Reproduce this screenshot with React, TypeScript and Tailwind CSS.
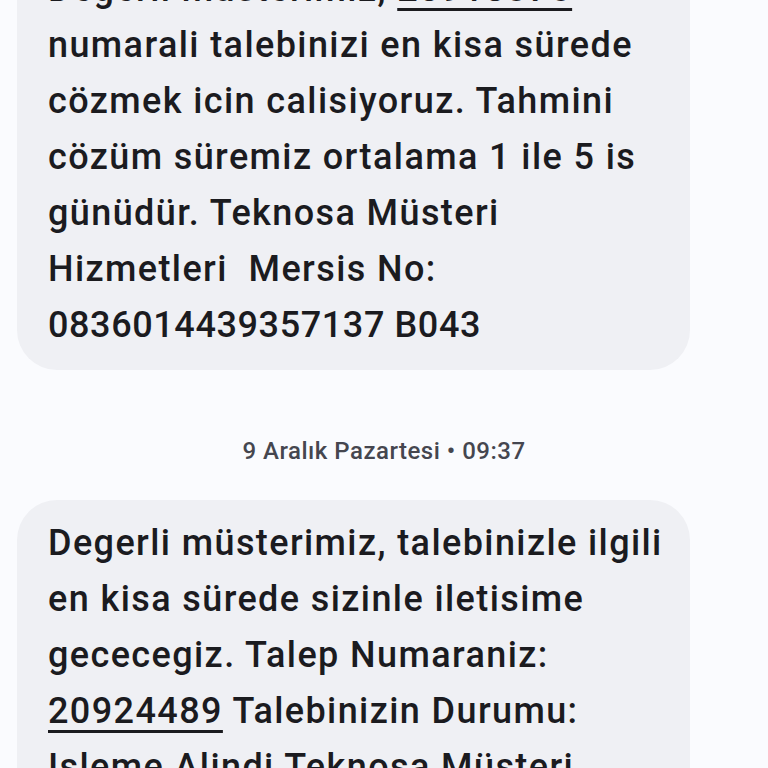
const topLines: React.ReactNode[] = [
  <>
    Degerli müsterimiz, <span className="underline decoration-[3px] underline-offset-[7px]">20918375</span>
  </>,
  "numarali talebinizi en kisa sürede",
  "cözmek icin calisiyoruz. Tahmini",
  "cözüm süremiz ortalama 1 ile 5 is",
  "günüdür. Teknosa Müsteri",
  "Hizmetleri  Mersis No:",
  <span className="tracking-[0.6px]">0836014439357137 B043</span>,
];

const bottomLines: React.ReactNode[] = [
  "Degerli müsterimiz, talebinizle ilgili",
  "en kisa sürede sizinle iletisime",
  "gececegiz. Talep Numaraniz:",
  <>
    <span className="underline decoration-[3px] underline-offset-[7px]">20924489</span> Talebinizin Durumu:
  </>,
  "Isleme Alindi Teknosa Müsteri",
];

function Bubble({ lines }: { lines: React.ReactNode[] }) {
  return (
    <div className="ml-[17px] w-[673px] rounded-[40px] bg-[#eff0f4] pl-[31px] pt-[15px] pb-[17px] text-[#1b1b1f]">
      {lines.map((line, i) => (
        <div key={i} className="h-[56px] whitespace-pre leading-[56px]">
          {line}
        </div>
      ))}
    </div>
  );
}

export default function App() {
  return (
    <div
      className="h-[768px] w-[768px] overflow-hidden bg-[#fafbfe] text-[36px] font-medium tracking-[1.4px]"
      style={{ fontFamily: "Roboto, 'Noto Sans', sans-serif" }}
    >
      <div className="-mt-[54px]">
        <Bubble lines={topLines} />
        <div className="flex h-[130px] items-center justify-center pt-[32px] text-[24px] tracking-[0.5px] text-[#45464f]">
          9 Aralık Pazartesi • 09:37
        </div>
        <Bubble lines={bottomLines} />
      </div>
    </div>
  );
}
